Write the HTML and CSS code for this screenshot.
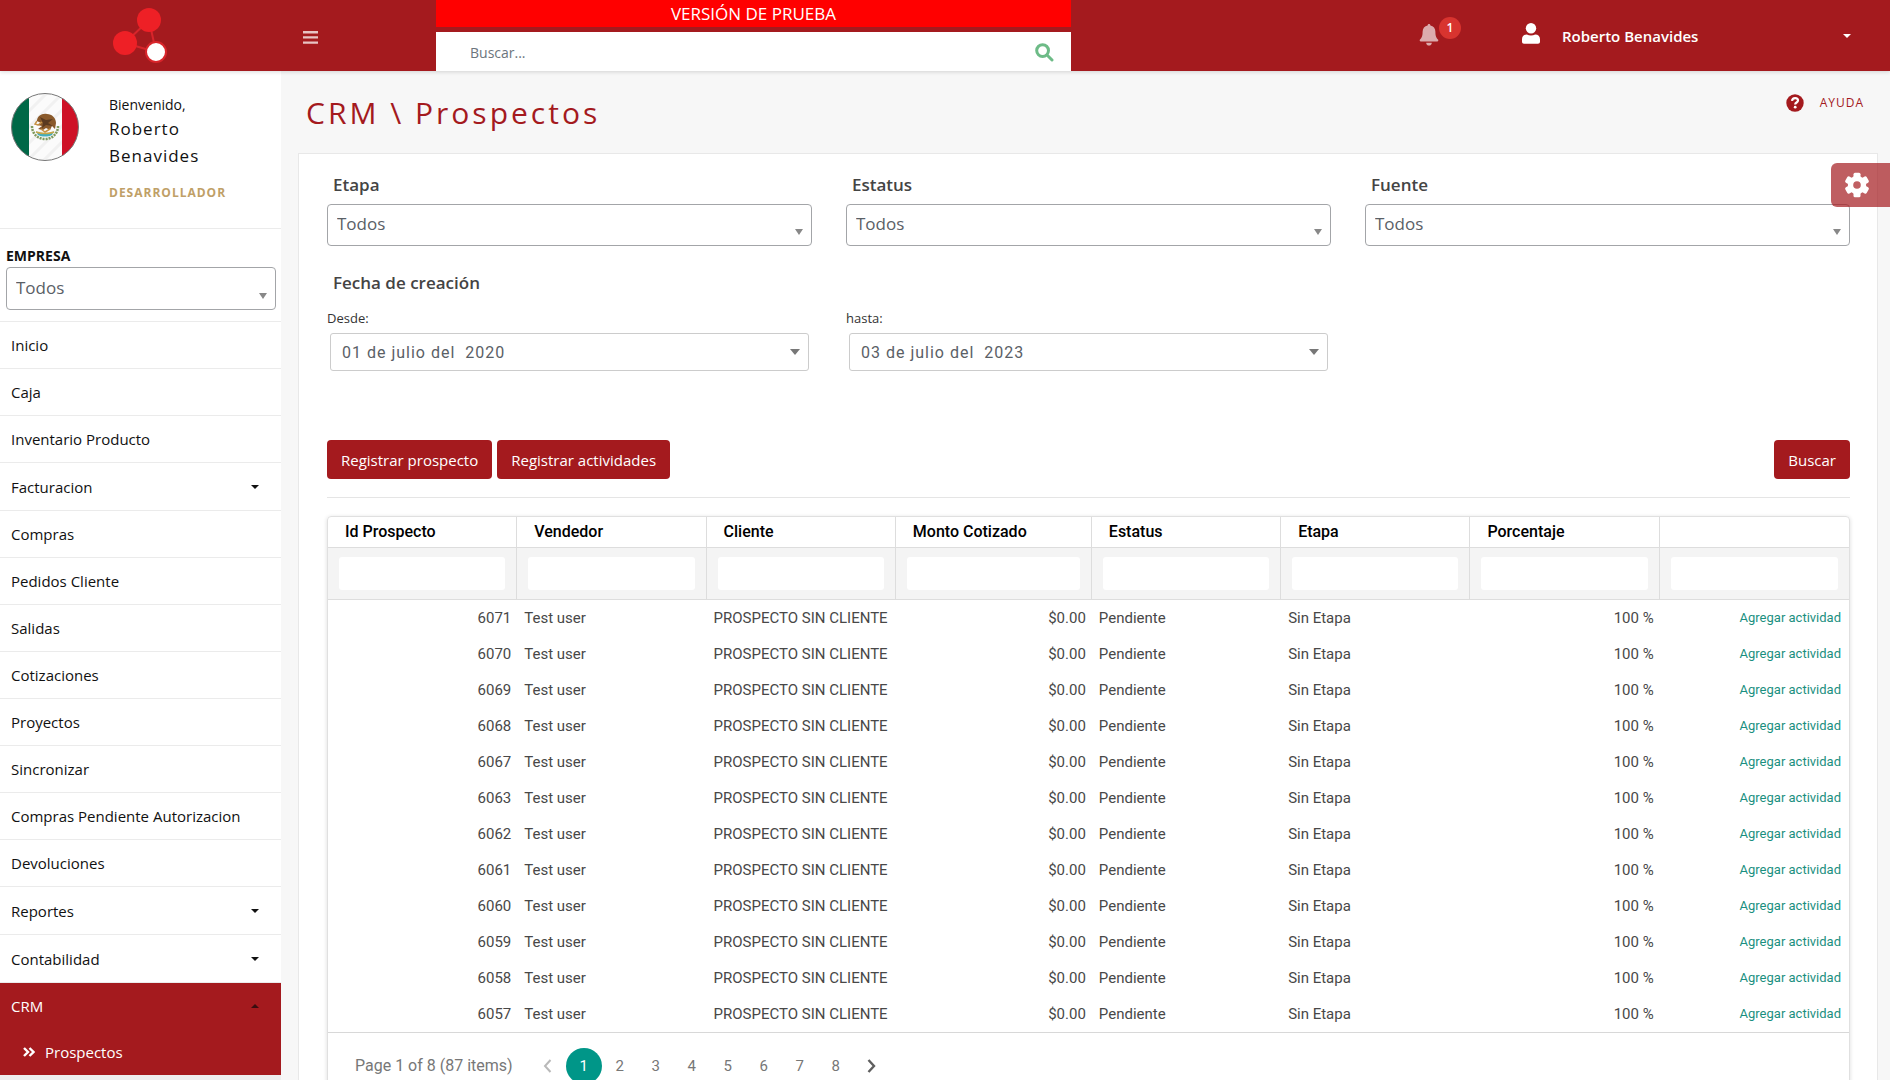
FILE: index.html
```html
<!DOCTYPE html>
<html lang="es">
<head>
<meta charset="utf-8">
<meta name="viewport" content="width=device-width, initial-scale=1">
<title>CRM \ Prospectos</title>
<link rel="stylesheet" href="styles.css">
</head>
<body>
<header class="topbar">
  <a class="brand" href="#" aria-label="Inicio">
    <svg width="56" height="58" viewBox="0 0 56 58">
      <g stroke="#d8252b" stroke-width="2"><path d="M36 14 12 37M36 14l7 32M12 37l31 9"/></g>
      <circle cx="36" cy="14" r="12" fill="#ee2026"/><circle cx="12" cy="37" r="12" fill="#ee2026"/>
      <circle cx="43" cy="46" r="10" fill="#fff" stroke="#d8252b" stroke-width="2"/>
    </svg>
  </a>
  <button class="menu-toggle" type="button" aria-label="Menú">
    <svg width="15" height="13" viewBox="0 0 15 13" fill="#e8c3c4"><path d="M0 0h15v2.4H0zM0 5.2h15v2.4H0zM0 10.4h15v2.4H0z"/></svg>
  </button>
  <div class="center">
    <div class="trial">VERSIÓN DE PRUEBA</div>
    <form class="search">
      <input type="search" placeholder="Buscar..." aria-label="Buscar">
      <button type="button" aria-label="Buscar">
        <svg width="19" height="19" viewBox="0 0 19 19" fill="none" stroke="#6dbb87" stroke-width="3"><circle cx="7.6" cy="7.6" r="5.9"/><path d="m12 12 5 5" stroke-linecap="round"/></svg>
      </button>
    </form>
  </div>
  <button class="bell" type="button" aria-label="Notificaciones">
    <svg width="20" height="22" viewBox="0 0 20 22" fill="#dcabad"><path d="M10 0c.9 0 1.4.6 1.4 1.5 3 .6 5 3 5 6.2 0 4.500 1 6.200 2.600 7.800.6.7.3 1.900-.8 1.900H1.800c-1.100 0-1.400-1.200-.8-1.900 1.600-1.600 2.600-3.300 2.600-7.800 0-3.200 2-5.600 5-6.200C8.600.6 9.100 0 10 0ZM7.200 18.700h5.600c0 1.700-1.200 2.900-2.800 2.900s-2.800-1.200-2.800-2.900Z"/></svg>
    <span class="badge">1</span>
  </button>
  <button class="user" type="button">
    <svg width="18" height="21" viewBox="0 0 18 21" fill="#fff"><circle cx="9" cy="5.200" r="5.200"/><path d="M4.800 11.500c1.300.7 2.700 1 4.200 1s2.900-.3 4.200-1c3 0 4.800 2 4.800 4.800v2.500c0 1.200-.8 2-2 2H2c-1.200 0-2-.8-2-2v-2.500c0-2.800 1.800-4.800 4.800-4.800Z"/></svg>
    <span>Roberto Benavides</span>
    <i class="caret"></i>
  </button>
</header>

<div class="shell">
  <aside class="sidebar">
    <section class="profile">
      <svg class="flag" width="68" height="68" viewBox="0 0 68 68">
        <defs><clipPath id="disc"><circle cx="34" cy="34" r="33.500"/></clipPath></defs>
        <g clip-path="url(#disc)">
          <path fill="#fbfbfb" d="M0 0h68v68H0z"/>
          <path stroke="#f1f1f1" stroke-width="3" d="M14 22 38 -2M14 38 54 -2M14 54 56 12M14 70 56 28M28 72 56 44"/>
          <path fill="#006847" d="M0 0h18v68H0z"/><path fill="#ce1126" d="M51 0h17v68H51z"/>
          <path d="M21 33c0 8 6 13 13 13s13-5 13-13" fill="none" stroke="#7f9a5c" stroke-width="2.500" stroke-dasharray="2 1"/>
          <path d="M25 38c4 3 14 3 18 0l-2 4c-4 2-10 2-14 0Z" fill="#45aebb"/>
          <path d="M25 39c5 2 13 2 18 0" fill="none" stroke="#c9a646" stroke-width="1.500"/>
          <path d="M26 28c0-5 5-8 10-7 5 0 9 4 9 9l-1 6-3-3-2 4-4-2-3 2-5-1 4-3-5-1 4-2Z" fill="#8a5a2b"/>
          <path d="m29 24 6 3 7-1-5 4 5 3-7-1-4 3 1-5Z" fill="#5a3a20"/>
          <path d="m26 28-2 3 3 1 4-3M30 36l4 3 5-3" fill="none" stroke="#c69245" stroke-width="1.500"/>
        </g>
        <circle cx="34" cy="34" r="33.500" fill="none" stroke="#777"/>
      </svg>
      <div class="who">
        <span class="hello">Bienvenido,</span>
        <h2>Roberto Benavides</h2>
        <span class="role">DESARROLLADOR</span>
      </div>
    </section>
    <section class="company">
      <label for="empresa">EMPRESA</label>
      <div class="picker"><select id="empresa"><option>Todos</option></select></div>
    </section>
    <nav>
      <ul class="menu">
        <li><a href="#">Inicio</a></li>
        <li><a href="#">Caja</a></li>
        <li><a href="#">Inventario Producto</a></li>
        <li><a class="parent" href="#">Facturacion<i class="caret"></i></a></li>
        <li><a href="#">Compras</a></li>
        <li><a href="#">Pedidos Cliente</a></li>
        <li><a href="#">Salidas</a></li>
        <li><a href="#">Cotizaciones</a></li>
        <li><a href="#">Proyectos</a></li>
        <li><a href="#">Sincronizar</a></li>
        <li><a href="#">Compras Pendiente Autorizacion</a></li>
        <li><a href="#">Devoluciones</a></li>
        <li><a class="parent" href="#">Reportes<i class="caret"></i></a></li>
        <li><a class="parent" href="#">Contabilidad<i class="caret"></i></a></li>
        <li class="open">
          <a href="#">CRM<i class="caret up"></i></a>
          <a class="child" href="#"><svg width="12" height="10" viewBox="0 0 12 10" fill="none" stroke="#fff" stroke-width="2.400"><path d="m1 1 4 4-4 4M6.500 1l4 4-4 4"/></svg>Prospectos</a>
        </li>
      </ul>
    </nav>
  </aside>

  <main class="main">
    <div class="heading">
      <h1>CRM \ Prospectos</h1>
      <a class="help" href="#">
        <svg width="18" height="18" viewBox="0 0 18 18"><circle cx="9" cy="9" r="8.700" fill="#a41a1e"/><path d="M6 6.900C6.200 5 7.400 4.100 9.100 4.100c1.700 0 2.900 1 2.900 2.400 0 2-2.800 2-2.800 3.900" fill="none" stroke="#fff" stroke-width="2.200"/><circle cx="9.200" cy="13.200" r="1.400" fill="#fff"/></svg>
        AYUDA
      </a>
    </div>

    <section class="card">
      <form>
        <div class="filters">
          <div class="field"><label for="etapa">Etapa</label><div class="picker"><select id="etapa"><option>Todos</option></select></div></div>
          <div class="field"><label for="estatus">Estatus</label><div class="picker"><select id="estatus"><option>Todos</option></select></div></div>
          <div class="field"><label for="fuente">Fuente</label><div class="picker"><select id="fuente"><option>Todos</option></select></div></div>
        </div>
        <h3 class="group-title">Fecha de creación</h3>
        <div class="filters">
          <div class="date"><label for="desde">Desde:</label><div class="date-box"><input id="desde" type="text" value="01 de julio del  2020"><i class="drop"></i></div></div>
          <div class="date"><label for="hasta">hasta:</label><div class="date-box"><input id="hasta" type="text" value="03 de julio del  2023"><i class="drop"></i></div></div>
        </div>
        <div class="actions">
          <button type="button">Registrar prospecto</button>
          <button type="button">Registrar actividades</button>
          <button class="find" type="button">Buscar</button>
        </div>
      </form>

      <div class="grid">
        <table>
          <colgroup><col><col><col><col class="wide"><col><col><col><col></colgroup>
          <thead>
            <tr class="titles"><th>Id Prospecto</th><th>Vendedor</th><th>Cliente</th><th>Monto Cotizado</th><th>Estatus</th><th>Etapa</th><th>Porcentaje</th><th></th></tr>
            <tr class="search-row">
              <td><input type="text" aria-label="Filtrar Id Prospecto"></td><td><input type="text" aria-label="Filtrar Vendedor"></td><td><input type="text" aria-label="Filtrar Cliente"></td><td><input type="text" aria-label="Filtrar Monto Cotizado"></td><td><input type="text" aria-label="Filtrar Estatus"></td><td><input type="text" aria-label="Filtrar Etapa"></td><td><input type="text" aria-label="Filtrar Porcentaje"></td><td><input type="text" aria-label="Filtrar acciones"></td>
            </tr>
          </thead>
          <tbody>
            <tr><td class="num">6071</td><td>Test user</td><td>PROSPECTO SIN CLIENTE</td><td class="num">$0.00</td><td>Pendiente</td><td>Sin Etapa</td><td class="num">100 %</td><td class="act"><a href="#">Agregar actividad</a></td></tr>
            <tr><td class="num">6070</td><td>Test user</td><td>PROSPECTO SIN CLIENTE</td><td class="num">$0.00</td><td>Pendiente</td><td>Sin Etapa</td><td class="num">100 %</td><td class="act"><a href="#">Agregar actividad</a></td></tr>
            <tr><td class="num">6069</td><td>Test user</td><td>PROSPECTO SIN CLIENTE</td><td class="num">$0.00</td><td>Pendiente</td><td>Sin Etapa</td><td class="num">100 %</td><td class="act"><a href="#">Agregar actividad</a></td></tr>
            <tr><td class="num">6068</td><td>Test user</td><td>PROSPECTO SIN CLIENTE</td><td class="num">$0.00</td><td>Pendiente</td><td>Sin Etapa</td><td class="num">100 %</td><td class="act"><a href="#">Agregar actividad</a></td></tr>
            <tr><td class="num">6067</td><td>Test user</td><td>PROSPECTO SIN CLIENTE</td><td class="num">$0.00</td><td>Pendiente</td><td>Sin Etapa</td><td class="num">100 %</td><td class="act"><a href="#">Agregar actividad</a></td></tr>
            <tr><td class="num">6063</td><td>Test user</td><td>PROSPECTO SIN CLIENTE</td><td class="num">$0.00</td><td>Pendiente</td><td>Sin Etapa</td><td class="num">100 %</td><td class="act"><a href="#">Agregar actividad</a></td></tr>
            <tr><td class="num">6062</td><td>Test user</td><td>PROSPECTO SIN CLIENTE</td><td class="num">$0.00</td><td>Pendiente</td><td>Sin Etapa</td><td class="num">100 %</td><td class="act"><a href="#">Agregar actividad</a></td></tr>
            <tr><td class="num">6061</td><td>Test user</td><td>PROSPECTO SIN CLIENTE</td><td class="num">$0.00</td><td>Pendiente</td><td>Sin Etapa</td><td class="num">100 %</td><td class="act"><a href="#">Agregar actividad</a></td></tr>
            <tr><td class="num">6060</td><td>Test user</td><td>PROSPECTO SIN CLIENTE</td><td class="num">$0.00</td><td>Pendiente</td><td>Sin Etapa</td><td class="num">100 %</td><td class="act"><a href="#">Agregar actividad</a></td></tr>
            <tr><td class="num">6059</td><td>Test user</td><td>PROSPECTO SIN CLIENTE</td><td class="num">$0.00</td><td>Pendiente</td><td>Sin Etapa</td><td class="num">100 %</td><td class="act"><a href="#">Agregar actividad</a></td></tr>
            <tr><td class="num">6058</td><td>Test user</td><td>PROSPECTO SIN CLIENTE</td><td class="num">$0.00</td><td>Pendiente</td><td>Sin Etapa</td><td class="num">100 %</td><td class="act"><a href="#">Agregar actividad</a></td></tr>
            <tr><td class="num">6057</td><td>Test user</td><td>PROSPECTO SIN CLIENTE</td><td class="num">$0.00</td><td>Pendiente</td><td>Sin Etapa</td><td class="num">100 %</td><td class="act"><a href="#">Agregar actividad</a></td></tr>
          </tbody>
        </table>
        <div class="pager">
          <span class="summary">Page 1 of 8 (87 items)</span>
          <button type="button" aria-label="Anterior"><svg width="9" height="14" viewBox="0 0 9 14" fill="none" stroke="#b9b9b9" stroke-width="2"><path d="M7.500 1 2 7l5.500 6"/></svg></button>
          <button class="current" type="button">1</button>
          <button type="button">2</button><button type="button">3</button><button type="button">4</button><button type="button">5</button><button type="button">6</button><button type="button">7</button><button type="button">8</button>
          <button type="button" aria-label="Siguiente"><svg width="9" height="14" viewBox="0 0 9 14" fill="none" stroke="#5f5f5f" stroke-width="2.400"><path d="m1.500 1 5.500 6-5.500 6"/></svg></button>
        </div>
      </div>
    </section>
  </main>
</div>

<button class="settings" type="button" aria-label="Configuración">
  <svg width="26" height="26" viewBox="-13 -13 26 26"><g fill="#fff"><circle r="9.200"/><rect x="-3.500" y="-12.300" width="7" height="24.600" rx="1.500"/><rect x="-3.500" y="-12.300" width="7" height="24.600" rx="1.500" transform="rotate(60)"/><rect x="-3.500" y="-12.300" width="7" height="24.600" rx="1.500" transform="rotate(120)"/></g><circle r="3.800" fill="#c05f62"/></svg>
</button>
</body>
</html>
```
FILE: styles.css
```css
* { box-sizing: border-box; }

:root {
  --brand: #a41a1e;
  --line: #ebebeb;
  --ui: "Open Sans", "Noto Sans", sans-serif;
  --data: Roboto, sans-serif;
}

html, body { height: 100%; }
body {
  margin: 0;
  display: flex;
  flex-direction: column;
  overflow: hidden;
  font: 15px/24px var(--ui);
  color: #111;
  background: #f7f7f7;
}
button, input, select { font: inherit; color: inherit; }
button { border: 0; padding: 0; background: none; cursor: pointer; }
a { color: inherit; text-decoration: none; }
svg { display: block; flex: none; }

.caret {
  border: 4px solid transparent;
  border-top-color: currentColor;
  border-bottom-width: 0;
}
.caret.up {
  border-bottom: 4px solid #3a0d0f;
  border-top-width: 0;
}

/* Top bar */
.topbar {
  position: relative;
  z-index: 1;
  flex: none;
  height: 71px;
  display: flex;
  color: #fff;
  background: var(--brand);
  box-shadow: 0 1px 4px rgba(0, 0, 0, .15);
}
.brand { width: 281px; display: flex; justify-content: center; padding-top: 6px; }
.menu-toggle { width: 59px; height: 74px; display: grid; place-items: center; }
.center { width: 635px; margin-left: 96px; display: flex; flex-direction: column; gap: 5px; }
.trial { height: 27px; text-align: center; font-size: 17px; line-height: 28px; background: #f00; }
.search { flex: 1; display: flex; align-items: center; padding: 2px 17px 0 34px; background: #fff; }
.search input { flex: 1; border: 0; padding: 0; outline: 0; background: none; font-size: 14px; color: #555; }
.search input::placeholder { color: #6c757d; opacity: 1; }
.bell { position: relative; margin-left: 348px; height: 70px; display: flex; align-items: center; }
.bell .badge {
  position: absolute;
  left: 20px;
  top: 17px;
  width: 22px;
  height: 22px;
  border-radius: 50%;
  background: #d8342f;
  font-size: 12px;
  font-weight: 600;
  line-height: 22px;
}
.user { flex: 1; margin-left: 83px; padding: 0 39px 0 0; display: flex; align-items: center; gap: 22px; font-weight: 600; }
.user svg { margin-bottom: 4px; }
.user .caret { margin-left: auto; }

/* Sidebar */
.shell { flex: 1; min-height: 0; display: flex; }
.sidebar { flex: none; width: 281px; overflow: hidden; background: #eee; }
.profile { height: 158px; display: flex; gap: 30px; padding: 22px 24px 0 11px; background: #fff; border-bottom: 1px solid var(--line); }
.who { display: flex; flex-direction: column; width: 130px; }
.hello { padding-top: 2px; font-size: 14px; line-height: 20px; }
.who h2 { margin: 0 0 12px; font-size: 17px; font-weight: 500; line-height: 27px; letter-spacing: 1px; }
.role { font-size: 12px; font-weight: 700; letter-spacing: 1px; color: #bfa067; }
.company { padding: 15px 5px 11px 6px; background: #fff; border-bottom: 1px solid var(--line); }
.company label { display: block; line-height: 23px; font-size: 14px; font-weight: 700; }
.company .picker select { height: 43px; }

.picker { position: relative; }
.picker select {
  display: block;
  width: 100%;
  height: 42px;
  padding: 0 24px 2px 9px;
  appearance: none;
  border: 1px solid #a3a5a8;
  border-radius: 4px;
  background: #fff;
  font-size: 17px;
  color: #5a6066;
}
.picker::after {
  content: "";
  position: absolute;
  right: 9px;
  bottom: 11px;
  border: 4px solid transparent;
  border-top: 6px solid #888;
  border-bottom: 0;
}

.menu { margin: 0; padding: 0; list-style: none; }
.menu li { border-bottom: 1px solid var(--line); background: #fff; }
.menu a { display: flex; align-items: center; height: 46px; padding: 0 22px 0 11px; }
.menu .parent { height: 47px; }
.menu .caret { margin-left: auto; }
.menu .open { border: 0; background: var(--brand); color: #fff; }
.menu .child { height: 46px; padding-left: 23px; gap: 10px; }

/* Content */
.main { flex: 1; min-width: 0; overflow: hidden; padding: 0 12px 0 17px; }
.heading { display: flex; justify-content: space-between; height: 82px; padding: 18px 14px 0 8px; }
h1 { margin: 0; font-size: 30px; font-weight: 500; line-height: 48px; letter-spacing: 3px; color: var(--brand); }
.help { display: flex; gap: 16px; height: 28px; align-items: center; font-size: 12px; letter-spacing: 1px; color: var(--brand); }

.card { padding: 19px 27px 20px 28px; border: 1px solid #e8e8e8; background: #fff; }
.filters { display: grid; grid-template-columns: repeat(3, 1fr); gap: 34px; }
.field label { display: block; padding: 0 6px 7px; line-height: 24px; font-size: 17px; font-weight: 600; color: #444; }
.group-title { margin: 25px 6px 11px; font-size: 17px; font-weight: 600; line-height: 24px; color: #444; }
.date label { display: block; margin-bottom: 3px; font-size: 13px; color: #333; line-height: 24px; }
.date-box { position: relative; margin: 0 3px; }
.date-box input {
  display: block;
  width: 100%;
  height: 38px;
  padding: 0 32px 0 11px;
  border: 1px solid #ccc;
  border-radius: 3px;
  font: 16px var(--data);
  letter-spacing: 1px;
  color: #5a6066;
}
.drop { position: absolute; right: 9px; top: 16px; border: 5px solid transparent; border-top: 6px solid #777; border-bottom: 0; }

.actions { display: flex; gap: 5px; margin-top: 69px; padding-bottom: 18px; border-bottom: 1px solid #e5e5e5; }
.actions button { height: 39px; padding: 0 14px; border-radius: 4px; background: var(--brand); color: #fff; }
.actions .find { margin-left: auto; }

/* Data grid */
.grid {
  margin-top: 18px;
  border: 1px solid #e0e0e0;
  border-radius: 4px;
  box-shadow: 0 1px 4px rgba(0, 0, 0, .14);
  font-family: var(--data);
  font-size: 15px;
  color: #484848;
}
table { width: 100%; table-layout: fixed; border-collapse: separate; border-spacing: 0; }
.wide { width: 196px; }
thead th, thead td { border-bottom: 1px solid #ddd; }
thead th:not(:last-child), thead td:not(:last-child) { border-right: 1px solid #ddd; }
th { height: 31px; padding: 0 17px; text-align: left; font-size: 16px; font-weight: 500; color: #000; white-space: nowrap; }
.search-row td { height: 52px; padding: 0 11px; background: #f4f4f4; }
.search-row input { display: block; width: 100%; height: 33px; padding: 0 8px; border: 0; border-radius: 3px; background: #fff; }
tbody td { height: 36px; padding: 0 6px 0 7px; white-space: nowrap; }
.num { text-align: right; }
.act { text-align: right; padding-right: 8px; font-size: 13px; color: #1b8f7f; }
.pager { display: flex; align-items: center; height: 66px; padding: 0 27px; border-top: 1px solid #d8d8d8; color: #777; font-size: 16px; }
.pager .summary { margin-right: 17px; }
.pager button { width: 36px; height: 36px; display: grid; place-items: center; border-radius: 50%; font-size: 15px; }
.pager .current { background: #009688; color: #fff; }

.settings {
  position: fixed;
  z-index: 2;
  right: 0;
  top: 163px;
  width: 59px;
  height: 44px;
  padding-left: 13px;
  border-radius: 6px 0 0 6px;
  background: rgba(164, 26, 30, .7);
}
```
